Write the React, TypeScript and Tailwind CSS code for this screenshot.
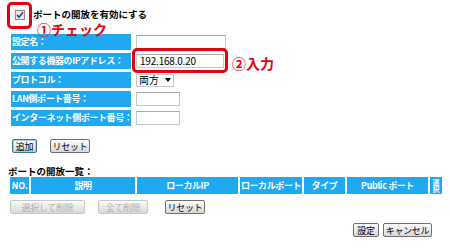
import React from 'react';

const blue = 'bg-[#20a8f0]';

const Btn: React.FC<{ w: string; disabled?: boolean; focus?: boolean; children: React.ReactNode }> = ({ w, disabled, focus, children }) => (
    <button
        className={`${w} h-[14px] flex items-center justify-center rounded-[2px] text-[9px] leading-none whitespace-nowrap tracking-[-0.3px] bg-gradient-to-b from-[#fbfbfb] to-[#d8d8d8] ${
            disabled ? 'border border-[#c8c8c8] text-[#b0b0b0]' : focus ? 'border border-[#3a7a8c] text-black shadow-[inset_0_0_0_1px_#9fd4e4]' : 'border border-[#707070] text-black'
        }`}
    >
        {children}
    </button>
);

const FormRow: React.FC<{ label: string; children: React.ReactNode }> = ({ label, children }) => (
    <div className="flex items-center gap-[5px] h-[16px]">
        <div className={`w-[120px] h-[16px] ${blue} text-white font-bold text-[9px] tracking-[-0.4px] leading-[16px] pl-[1px] whitespace-nowrap overflow-hidden`}>{label}</div>
        {children}
    </div>
);

const TextBox: React.FC<{ w: string; value?: string }> = ({ w, value }) => (
    <div className={`${w} h-[14px] border border-[#c6c6c6] border-t-[#a8a8a8] bg-white text-black leading-[12px] pl-[3px] text-[10px] tracking-[-0.2px]`}>{value}</div>
);

const heads = [
    { t: 'NO.', w: 'w-[19px]' },
    { t: '説明', w: 'w-[104px]' },
    { t: 'ローカルIP', w: 'w-[101px]' },
    { t: 'ローカルポート', w: 'w-[62px]' },
    { t: 'タイプ', w: 'w-[41px]' },
    { t: 'Public ポート', w: 'w-[81px]' },
];

export default function App() {
    return (
        <div className="relative w-[450px] h-[249px] bg-white overflow-hidden text-[10px] text-black font-['Noto_Sans_CJK_JP',sans-serif]">
            {/* checkbox */}
            <div className="flex items-center pt-[10px] pl-[15px] h-[20px]">
                <span className="w-[10px] h-[10px] border border-[#8a8a8a] bg-[#e6e6e6] flex items-center justify-center">
                    <svg width="8" height="8" viewBox="0 0 8 8" fill="none" stroke="#2a3a6a" strokeWidth="1.4">
                        <path d="M1 4 L3 6.2 L7 1.2" />
                    </svg>
                </span>
                <span className="ml-[8px] font-bold text-[9.5px] leading-none whitespace-nowrap">ポートの開放を有効にする</span>
            </div>

            {/* form */}
            <div className="flex flex-col gap-[3px] pl-[11px] mt-[14px]">
                <FormRow label="設定名：">
                    <TextBox w="w-[90px]" />
                </FormRow>
                <FormRow label="公開する機器のIPアドレス：">
                    <TextBox w="w-[88px]" value="192.168.0.20" />
                </FormRow>
                <FormRow label="プロトコル：">
                    <div className="w-[38px] h-[13px] border border-[#c6c6c6] bg-white flex items-center justify-between px-[2px] leading-none">
                        <span>両方</span>
                        <svg width="6" height="4" viewBox="0 0 6 4"><path d="M0 0 H6 L3 4 Z" fill="#000" /></svg>
                    </div>
                </FormRow>
                <FormRow label="LAN側ポート番号：">
                    <TextBox w="w-[44px]" />
                </FormRow>
                <FormRow label="インターネット側ポート番号：">
                    <TextBox w="w-[44px]" />
                </FormRow>
            </div>

            <div className="flex items-center gap-[13px] pl-[12px] mt-[13px]">
                <Btn w="w-[25px]" focus>追加</Btn>
                <Btn w="w-[40px]">リセット</Btn>
            </div>

            <div className="pl-[8px] mt-[12px] font-bold text-[9.5px] leading-[12px]">ポートの開放一覧：</div>

            {/* list header */}
            <div className="flex gap-[2px] pl-[10px] h-[17px]">
                {heads.map((h) => (
                    <div key={h.t} className={`${h.w} ${blue} text-white font-bold text-[9px] tracking-[-0.4px] flex items-center justify-center whitespace-nowrap overflow-hidden`}>
                        {h.t}
                    </div>
                ))}
                <div className={`w-[12px] ${blue} text-white font-bold text-[7px] leading-[12px] flex items-center justify-center overflow-hidden`}>
                    <span className="[writing-mode:vertical-rl]">選択</span>
                </div>
            </div>

            <div className="flex items-center pl-[10px] mt-[6px]">
                <Btn w="w-[75px]" disabled>選択して削除</Btn>
                <div className="ml-[13px]"><Btn w="w-[50px]" disabled>全て削除</Btn></div>
                <div className="ml-[17px]"><Btn w="w-[40px]">リセット</Btn></div>
            </div>

            <div className="flex justify-end gap-[4px] pr-[18px] mt-[9px]">
                <Btn w="w-[26px]">設定</Btn>
                <Btn w="w-[49px]">キャンセル</Btn>
            </div>

            {/* annotations */}
            <div className="absolute left-[7px] top-[2px] w-[25px] h-[27px] border-[3px] border-[#e60012] rounded-[5px]" />
            <div className="absolute left-[37px] top-[23px] text-[14px] font-bold text-[#e60012] leading-[13px] whitespace-nowrap">①チェック</div>
            <div className="absolute left-[132px] top-[48px] w-[96px] h-[25px] border-[3px] border-[#e60012] rounded-[5px]" />
            <div className="absolute left-[232px] top-[55px] text-[14px] font-bold text-[#e60012] leading-[16px] whitespace-nowrap">②入力</div>
        </div>
    );
}
